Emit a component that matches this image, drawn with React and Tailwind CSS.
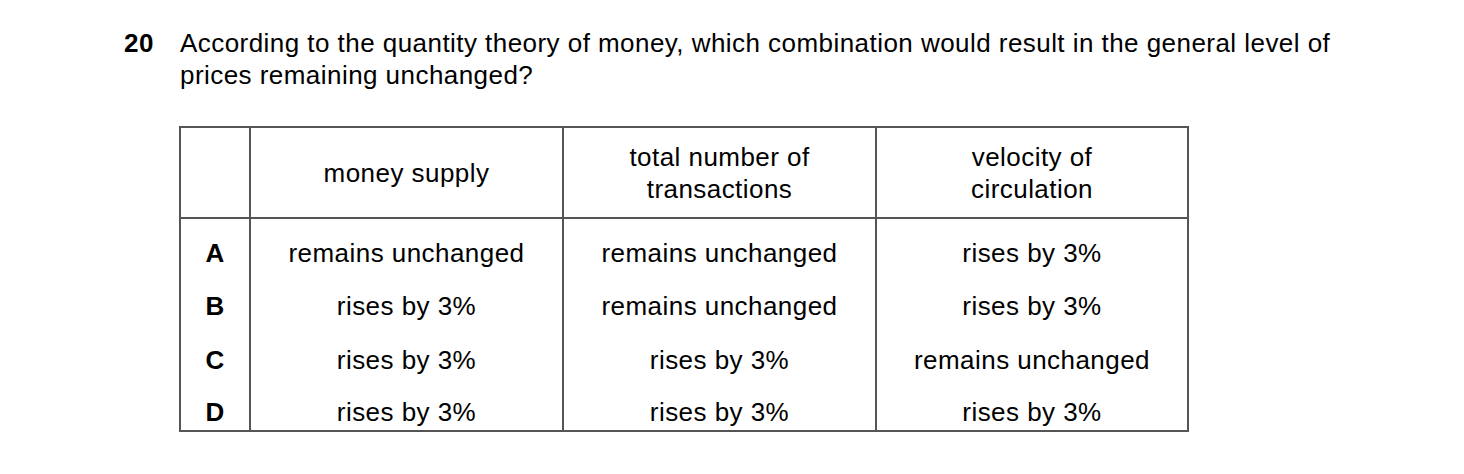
const rows = [
  { key: "A", cells: ["remains unchanged", "remains unchanged", "rises by 3%"], h: "h-[53px]" },
  { key: "B", cells: ["rises by 3%", "remains unchanged", "rises by 3%"], h: "h-[53px]" },
  { key: "C", cells: ["rises by 3%", "rises by 3%", "remains unchanged"], h: "h-[54px]" },
  { key: "D", cells: ["rises by 3%", "rises by 3%", "rises by 3%"], h: "h-[53px]" },
];

export default function App() {
  return (
    <div className="w-[1464px] h-[474px] bg-white text-black font-['Liberation_Sans',Arial,sans-serif] text-[26px] tracking-[0.45px] leading-8">
      {/* QUESTION */}
      <div className="flex pl-[124px] pt-[27px]">
        <span className="w-[56px] font-bold">20</span>
        <p>
          According to the quantity theory of money, which combination would result in the general level of
          <br />
          prices remaining unchanged?
        </p>
      </div>

      {/* TABLE */}
      <table className="ml-[179px] mt-[35px] border-collapse border-2 border-[#555] table-fixed w-[1008px]">
        <colgroup>
          <col className="w-[70px]" />
          <col className="w-[313px]" />
          <col className="w-[313px]" />
          <col className="w-[312px]" />
        </colgroup>
        <thead>
          <tr className="h-[91px] border-b-2 border-[#555]">
            <th className="border-r-2 border-[#555]" />
            <th className="font-normal border-r-2 border-[#555]">money supply</th>
            <th className="font-normal border-r-2 border-[#555]">total number of<br />transactions</th>
            <th className="font-normal">velocity of<br />circulation</th>
          </tr>
        </thead>
        <tbody>
          {rows.map((r) => (
            <tr key={r.key} className={r.h}>
              <td className="border-r-2 border-[#555] text-center font-bold align-bottom pb-[2px]">{r.key}</td>
              {r.cells.map((c, i) => (
                <td key={i} className={`text-center align-bottom pb-[2px] ${i < 2 ? "border-r-2 border-[#555]" : ""}`}>
                  {c}
                </td>
              ))}
            </tr>
          ))}
        </tbody>
      </table>
    </div>
  );
}
